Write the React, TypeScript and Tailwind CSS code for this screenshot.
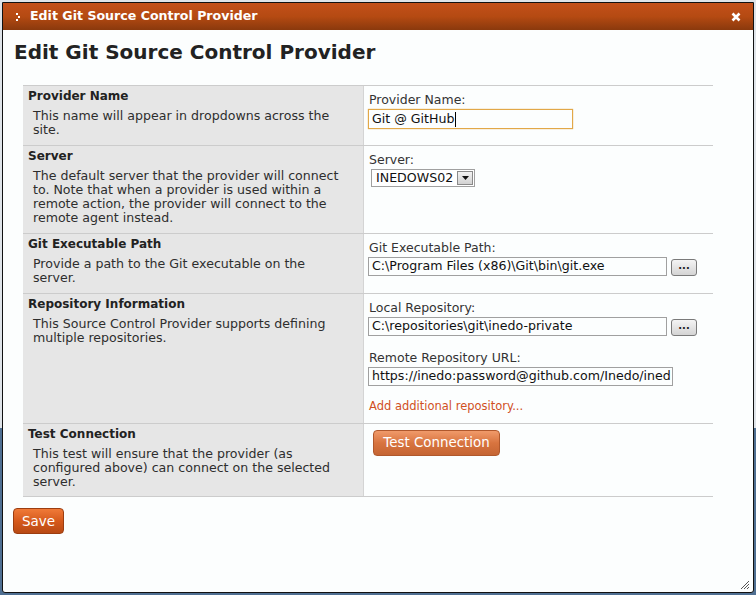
import React from 'react'

const font = { fontFamily: '"DejaVu Sans", Verdana, sans-serif' }

function Row({ title, desc, h, children, last }: { title: string; desc: string[]; h: string; children: React.ReactNode; last?: boolean }) {
  return (
    <div className={`grid grid-cols-[341px_1fr] border-t border-[#cccccc] ${last ? 'border-b' : ''} ${h}`}>
      <div className="bg-[#e6e6e6] border-r border-[#d4d4d4] pl-[5px] pt-[3px]">
        <div className="text-[12px] leading-[14px] font-bold text-[#222]">{title}</div>
        <p className="mt-[6px] ml-[5px] text-[12.6px] leading-[14px] text-[#2e2e2e]">
          {desc.map((l, i) => (
            <span key={i} className="block whitespace-nowrap">{l}</span>
          ))}
        </p>
      </div>
      <div className="pl-[4px] pt-[6px]">{children}</div>
    </div>
  )
}

function Label({ children }: { children: React.ReactNode }) {
  return <div className="pl-[1px] text-[12.5px] leading-[15px] text-[#333]">{children}</div>
}

function Browse() {
  return (
    <button className="ml-[4px] mt-[2px] h-[17px] w-[26px] rounded-[3px] border border-[#7a7a7a] bg-gradient-to-b from-[#f4f4f4] to-[#d4d4d4] text-[10px] font-bold leading-[10px] text-[#222] pb-[4px]">
      ...
    </button>
  )
}

export default function App() {
  return (
    <div className="relative w-[756px] h-[595px] overflow-hidden" style={font}>
      <div className="flex h-full flex-col">
        <div className="h-[428px] bg-[#dfe4e9]" />
        <div className="flex-1 bg-[#4f6f92]" />
      </div>

      <div className="absolute left-[2px] top-[2px] flex h-[591px] w-[752px] flex-col rounded-b-[3px] border border-[#111] bg-[#fcfefe]">
        {/* title bar */}
        <div className="flex h-[27px] items-center bg-gradient-to-b from-[#c3501a] via-[#b54a12] to-[#8a390d] pl-[13px] pr-[10px]">
          <svg width="6" height="8" viewBox="0 0 6 8" className="mr-[8px]">
            <rect x="0" y="0" width="2" height="2" fill="#fff" />
            <rect x="2" y="3" width="2" height="2" fill="#fff" />
            <rect x="0" y="6" width="2" height="2" fill="#fff" />
          </svg>
          <span className="text-[12.6px] font-bold text-white">Edit Git Source Control Provider</span>
          <svg width="10" height="10" viewBox="0 0 10 10" className="ml-auto mr-[2px]">
            <path d="M1.5 1.5 L8.5 8.5 M8.5 1.5 L1.5 8.5" stroke="#fff" strokeWidth="2.6" />
          </svg>
        </div>

        <div className="flex flex-1 flex-col pl-[11px]">
          <h1 className="mt-[10px] text-[20px] leading-[24px] font-bold text-[#222]">Edit Git Source Control Provider</h1>

          <div className="mt-[21px] ml-[9px] w-[690px]">
            <Row title="Provider Name" desc={['This name will appear in dropdowns across the', 'site.']} h="h-[60px]">
              <Label>Provider Name:</Label>
              <div className="mt-[2px] flex h-[20px] w-[205px] items-center border border-[#e2a848] px-[3px] text-[12.6px] text-[#111] shadow-[0_0_1px_#e2a848]">
                Git @ GitHub<span className="ml-px h-[15px] w-px bg-black" />
              </div>
            </Row>

            <Row
              title="Server"
              desc={[
                'The default server that the provider will connect',
                'to. Note that when a provider is used within a',
                'remote action, the provider will connect to the',
                'remote agent instead.',
              ]}
              h="h-[88px]"
            >
              <Label>Server:</Label>
              <div className="ml-[3px] mt-[2px] flex h-[18px] w-[104px] items-center border border-[#a0a0a0] bg-white pl-[4px] text-[12.6px] text-[#111]">
                INEDOWS02
                <span className="ml-auto mr-px flex h-[14px] w-[16px] items-center justify-center border border-[#8a8a8a] bg-gradient-to-b from-[#f2f2f2] to-[#d2d2d2]">
                  <svg width="7" height="4" viewBox="0 0 7 4"><path d="M0 0 H7 L3.5 4 Z" fill="#111" /></svg>
                </span>
              </div>
            </Row>

            <Row title="Git Executable Path" desc={['Provide a path to the Git executable on the', 'server.']} h="h-[60px]">
              <Label>Git Executable Path:</Label>
              <div className="mt-[2px] flex">
                <div className="flex h-[19px] w-[299px] items-center border border-[#a0a0a0] px-[3px] text-[12.6px] text-[#111]">
                  C:\Program Files (x86)\Git\bin\git.exe
                </div>
                <Browse />
              </div>
            </Row>

            <Row title="Repository Information" desc={['This Source Control Provider supports defining', 'multiple repositories.']} h="h-[130px]">
              <Label>Local Repository:</Label>
              <div className="mt-[2px] flex">
                <div className="flex h-[19px] w-[299px] items-center border border-[#a0a0a0] px-[3px] text-[12.6px] text-[#111]">
                  C:\repositories\git\inedo-private
                </div>
                <Browse />
              </div>
              <div className="mt-[14px]">
                <Label>Remote Repository URL:</Label>
              </div>
              <div className="mt-[2px] flex h-[19px] w-[305px] items-center overflow-hidden whitespace-nowrap border border-[#a0a0a0] pl-[3px] text-[12.6px] text-[#111]">
                https://inedo:password@github.com/Inedo/ined
              </div>
              <div className="mt-[12px] pl-[1px] text-[11.5px] text-[#d0501e]">Add additional repository...</div>
            </Row>

            <Row
              title="Test Connection"
              desc={['This test will ensure that the provider (as', 'configured above) can connect on the selected', 'server.']}
              h="h-[74px]"
              last
            >
              <button className="ml-[5px] mt-[-1px] h-[26px] w-[127px] rounded-[4px] border border-[#b0582c] bg-gradient-to-b from-[#f09a6a] via-[#d8743f] to-[#c56533] text-[13.4px] text-white">
                Test Connection
              </button>
            </Row>
          </div>

          <button className="mt-[11px] ml-[-1px] h-[26px] w-[51px] rounded-[4px] border border-[#9c3d10] bg-gradient-to-b from-[#f07a38] via-[#d65a1c] to-[#b84a14] text-[13.5px] text-white">
            Save
          </button>

          <div className="mt-auto flex justify-end pr-[3px] pb-[2px]">
            <svg width="11" height="11" viewBox="0 0 11 11">
              <path d="M10 2 L2 10 M10 5 L5 10 M10 8 L8 10" stroke="#555" strokeWidth="1" />
            </svg>
          </div>
        </div>
      </div>
    </div>
  )
}
